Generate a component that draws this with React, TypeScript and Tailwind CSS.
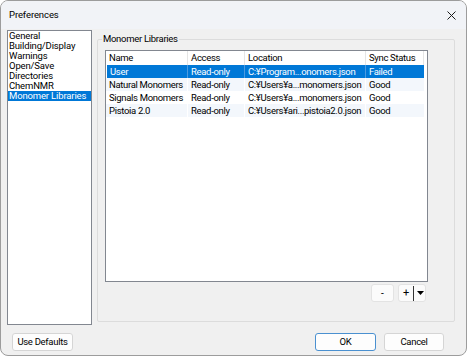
import React from 'react';

const sections = ['General', 'Building/Display', 'Warnings', 'Open/Save', 'Directories', 'ChemNMR', 'Monomer Libraries'];

const libraries = [
  { name: 'User', access: 'Read-only', location: 'C:\u00a5Program...onomers.json', status: 'Failed' },
  { name: 'Natural Monomers', access: 'Read-only', location: 'C:\u00a5Users\u00a5a...monomers.json', status: 'Good' },
  { name: 'Signals Monomers', access: 'Read-only', location: 'C:\u00a5Users\u00a5a...monomers.json', status: 'Good' },
  { name: 'Pistoia 2.0', access: 'Read-only', location: 'C:\u00a5Users\u00a5ari...pistoia2.0.json', status: 'Good' },
];

export default function App() {
  const selectedSection = 'Monomer Libraries';
  const selectedRow = 0;

  return (
    <div className="w-[468px] h-[357px] bg-white">
      <div className="w-[467px] h-[356px] flex flex-col rounded-lg border border-[#9c9c9c] bg-[#f0f0f0] overflow-hidden font-['Roboto',sans-serif] text-black">
        {/* title bar */}
        <div className="h-[28px] shrink-0 flex items-center justify-between pl-[8px] pr-[9px] bg-[#f1f3f7]">
          <span className="text-[9.5px] tracking-[-0.1px]">Preferences</span>
          <svg width="9" height="9" viewBox="0 0 9 9" className="mr-[1px]">
            <path d="M0.5 0.5 L8.5 8.5 M8.5 0.5 L0.5 8.5" stroke="#1a1a1a" strokeWidth="1" />
          </svg>
        </div>

        <div className="flex-1 flex flex-col pl-[6px] pr-[6px] pt-[1px]">
          <div className="flex gap-[5px]">
            {/* sections list */}
            <div className="w-[85px] h-[295px] border border-[#828790] bg-white">
              {sections.map((s) => (
                <div
                  key={s}
                  className={
                    'h-[10px] leading-[10px] pl-[1px] text-[9.5px] tracking-[-0.15px] whitespace-nowrap ' +
                    (s === selectedSection ? 'bg-[#0078d7] text-white' : '')
                  }
                >
                  {s}
                </div>
              ))}
            </div>

            {/* group box */}
            <fieldset className="mt-[3px] w-[358px] h-[289px] border border-[#dcdcdc] rounded-[2px]">
              <legend className="ml-[4px] px-[1px] text-[9.5px] tracking-[-0.3px] leading-[12px]">Monomer Libraries</legend>
              <div className="ml-[7px] mt-[5px] w-[323px]">
                <div className="h-[232px] border border-[#828790] bg-white text-[9.5px] tracking-[-0.32px]">
                  {/* header */}
                  <div className="flex h-[14px] leading-[14px]">
                    <div className="w-[82px] pl-[3px] border-r border-[#e5e5e5]">Name</div>
                    <div className="w-[57px] pl-[3px] border-r border-[#e5e5e5]">Access</div>
                    <div className="w-[121px] pl-[3px] border-r border-[#e5e5e5]">Location</div>
                    <div className="w-[58px] pl-[3px] border-r border-[#e5e5e5]">Sync Status</div>
                  </div>
                  {libraries.map((lib, i) => {
                    const sel = i === selectedRow;
                    const row = sel
                      ? 'bg-[#0078d7] text-white'
                      : i % 2 === 1
                        ? 'bg-[#f3f7fc]'
                        : 'bg-white';
                    const sep = sel ? 'border-r border-[#4d9be0]' : 'border-r border-white';
                    return (
                      <div key={lib.name} className={'flex h-[13px] leading-[13px] whitespace-nowrap ' + (sel ? 'ml-[1px]' : '')}>
                        <div className={(sel ? 'w-[81px] ' : 'w-[82px] ') + 'pl-[3px] overflow-hidden ' + row + ' ' + sep}>{lib.name}</div>
                        <div className={'w-[57px] pl-[3px] overflow-hidden ' + row + ' ' + sep}>{lib.access}</div>
                        <div className={'w-[121px] pl-[3px] overflow-hidden ' + row + ' ' + sep}>{lib.location}</div>
                        <div className={'w-[58px] pl-[3px] overflow-hidden ' + row}>{lib.status}</div>
                      </div>
                    );
                  })}
                </div>

                {/* add / remove */}
                <div className="flex justify-end gap-[4px] mt-[2px] pr-[2px]">
                  <button className="w-[23px] h-[18px] flex items-center justify-center bg-[#fbfbfb] border border-[#e3e3e3] rounded-[3px] text-[10px]">
                    -
                  </button>
                  <button className="w-[28px] h-[18px] flex items-center bg-[#fbfbfb] border border-[#e3e3e3] rounded-[3px] text-[11px]">
                    <span className="w-[14px] text-center leading-[16px]">+</span>
                    <span className="w-[1px] h-[15px] bg-[#333]" />
                    <svg width="7" height="4" viewBox="0 0 7 4" className="ml-[3px]">
                      <path d="M0 0 L7 0 L3.5 4 Z" fill="#000" />
                    </svg>
                  </button>
                </div>
              </div>
            </fieldset>
          </div>

          {/* bottom buttons */}
          <div className="flex items-center mt-[8px] text-[9.5px] tracking-[-0.3px]">
            <button className="ml-[5px] w-[61px] h-[18px] bg-[#fdfdfd] border border-[#d5d5d5] rounded-[3px]">Use Defaults</button>
            <div className="flex-1" />
            <button className="w-[61px] h-[18px] bg-[#fdfdfd] border border-[#4a90d0] rounded-[3px]">OK</button>
            <button className="ml-[8px] mr-[16px] w-[60px] h-[18px] bg-[#fdfdfd] border border-[#d5d5d5] rounded-[3px]">Cancel</button>
          </div>
        </div>
      </div>
    </div>
  );
}
